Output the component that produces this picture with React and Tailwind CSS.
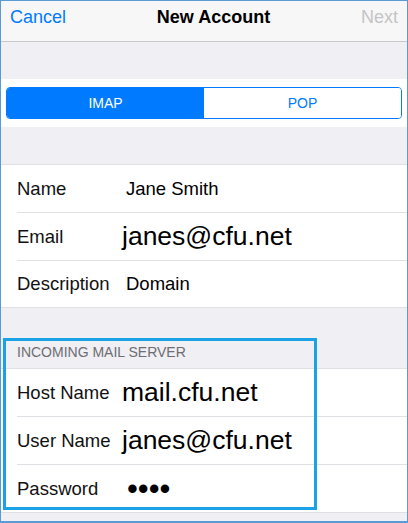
// New Account (mail setup) screen
const font = { fontFamily: '"Liberation Sans", Arial, sans-serif' };

const Row = ({ label, value, big, h = "h-[48px]", last }) => (
  <div className={`flex items-center ${h} ml-[16px] ${last ? "" : "border-b border-[#e0e0e4]"}`}>
    <div className="w-[109px] shrink-0 text-[18.5px] text-[#111]">{label}</div>
    {big ? (
      <div className="text-[26.5px] text-black -ml-[4px] leading-none">{value}</div>
    ) : (
      <div className="text-[18.5px] text-black">{value}</div>
    )}
  </div>
);

export default function App() {
  return (
    <div
      style={font}
      className="relative w-[408px] h-[523px] overflow-hidden bg-[#efeff4] border border-[#5b9bd5] border-b-2"
    >
      {/* nav bar */}
      <div className="flex items-center justify-between h-[41px] pb-[8px] px-[9px] bg-[#f7f7f7] border-b border-[#c8c7cc]">
        <span className="text-[18px] text-[#007aff]">Cancel</span>
        <span className="text-[18px] font-bold text-black">New Account</span>
        <span className="text-[18px] text-[#c4c4c6]">Next</span>
      </div>

      <div className="h-[37px]" />

      {/* segmented control */}
      <div className="bg-white h-[48px] pt-[8px] px-[5px]">
        <div className="flex h-[32px] rounded-[4px] border border-[#007aff] overflow-hidden">
          <div className="flex-1 flex items-center justify-center bg-[#007aff] text-white text-[14px]">IMAP</div>
          <div className="flex-1 flex items-center justify-center bg-white text-[#007aff] text-[14px]">POP</div>
        </div>
      </div>

      <div className="h-[37px]" />

      {/* account section */}
      <div className="bg-white border-y border-[#e0e0e4]">
        <Row label="Name" value="Jane Smith" />
        <Row label="Email" value="janes@cfu.net" big />
        <Row label="Description" value="Domain" h="h-[46px]" last />
      </div>

      {/* incoming mail server */}
      <div className="h-[60px] flex items-end pb-[5px] pl-[16px]">
        <span className="text-[14px] text-[#6d6d72] uppercase">Incoming Mail Server</span>
      </div>
      <div className="bg-white border-y border-[#e0e0e4]">
        <Row label="Host Name" value="mail.cfu.net" big />
        <Row label="User Name" value="janes@cfu.net" big />
        <div className="flex items-center h-[47px] ml-[16px]">
          <div className="w-[110px] shrink-0 text-[18.5px] text-[#111]">Password</div>
          <div className="text-[31px] leading-none text-black">••••</div>
        </div>
      </div>

      {/* highlight box */}
      <div className="absolute left-[2px] top-[337px] w-[314px] h-[172px] border-[3px] border-[#1ba1e5] pointer-events-none" />
    </div>
  );
}
